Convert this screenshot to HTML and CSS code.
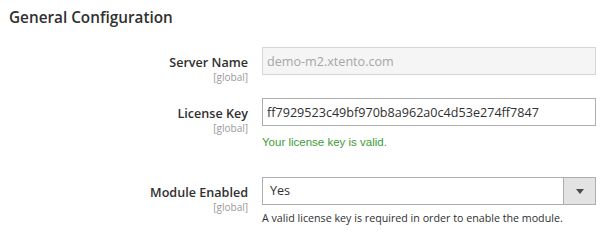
FILE: index.html
```html
<!DOCTYPE html>
<html lang="en">
<head>
    <meta charset="UTF-8">
    <title>General Configuration</title>
    <link rel="stylesheet" href="styles.css">
</head>
<body>
    <h2 class="section-title">General Configuration</h2>

    <!-- Config Rows -->
    <div class="config">
        <div class="row">
            <div class="label">
                <span class="label-text">Server Name</span>
                <span class="scope">[global]</span>
            </div>
            <div class="value">
                <input class="input" type="text" value="demo-m2.xtento.com" disabled>
            </div>
        </div>

        <div class="row">
            <div class="label">
                <span class="label-text">License Key</span>
                <span class="scope">[global]</span>
            </div>
            <div class="value">
                <input class="input" type="text" value="ff7929523c49bf970b8a962a0c4d53e274ff7847">
                <div class="valid-note">Your license key is valid.</div>
            </div>
        </div>

        <div class="row row-module">
            <div class="label">
                <span class="label-text">Module Enabled</span>
                <span class="scope">[global]</span>
            </div>
            <div class="value">
                <div class="select">
                    <span class="select-text">Yes</span>
                    <span class="select-arrow"></span>
                </div>
                <div class="note">A valid license key is required in order to enable the module.</div>
            </div>
        </div>
    </div>
</body>
</html>
```

FILE: styles.css
```css
/* General Styling */
body {
    margin: 0;
    padding: 0;
    font-family: 'Open Sans', sans-serif;
    background: #fff;
    color: #303030;
}

/* Section Title */
.section-title {
    margin: 0;
    padding: 7px 0 0 9px;
    font-size: 15.3px;
    font-weight: 600;
    color: #303030;
    line-height: 20px;
}

/* Rows */
.config {
    padding-top: 20px;
}
.row {
    display: grid;
    grid-template-columns: 248px 334px;
    column-gap: 14px;
    margin-bottom: 15px;
}
.row-module {
    margin-top: 29px;
}

/* Labels */
.label {
    display: flex;
    flex-direction: column;
    align-items: flex-end;
    padding-top: 7px;
}
.label-text {
    font-size: 12.6px;
    font-weight: 600;
    line-height: 17px;
}
.scope {
    font-size: 10px;
    line-height: 12px;
    color: #999;
}

/* Inputs */
.input {
    box-sizing: border-box;
    display: block;
    width: 334px;
    height: 28px;
    margin: 0;
    padding: 0 4px;
    border: 1px solid #adadad;
    font-family: 'Open Sans', sans-serif;
    font-size: 12.6px;
    color: #303030;
    background: #fff;
    outline: none;
}
.input:disabled {
    background: #f5f5f5;
    border-color: #d6d6d6;
    color: #a6a6a6;
}

.valid-note {
    margin-top: 10px;
    font-family: 'Liberation Sans', sans-serif;
    font-size: 11.5px;
    color: #3d9b35;
}

/* Select */
.select {
    box-sizing: border-box;
    display: flex;
    width: 334px;
    height: 28px;
    border: 1px solid #adadad;
}
.select-text {
    flex: 1;
    padding-left: 7px;
    font-size: 12.6px;
    line-height: 26px;
}
.select-arrow {
    width: 31px;
    background: #e3e3e3;
    border-left: 1px solid #adadad;
    position: relative;
}
.select-arrow::after {
    content: '';
    position: absolute;
    left: 12px;
    top: 11px;
    border-left: 4px solid transparent;
    border-right: 4px solid transparent;
    border-top: 5px solid #514943;
}

.note {
    margin-top: 6px;
    font-size: 10.7px;
    color: #303030;
}
```
